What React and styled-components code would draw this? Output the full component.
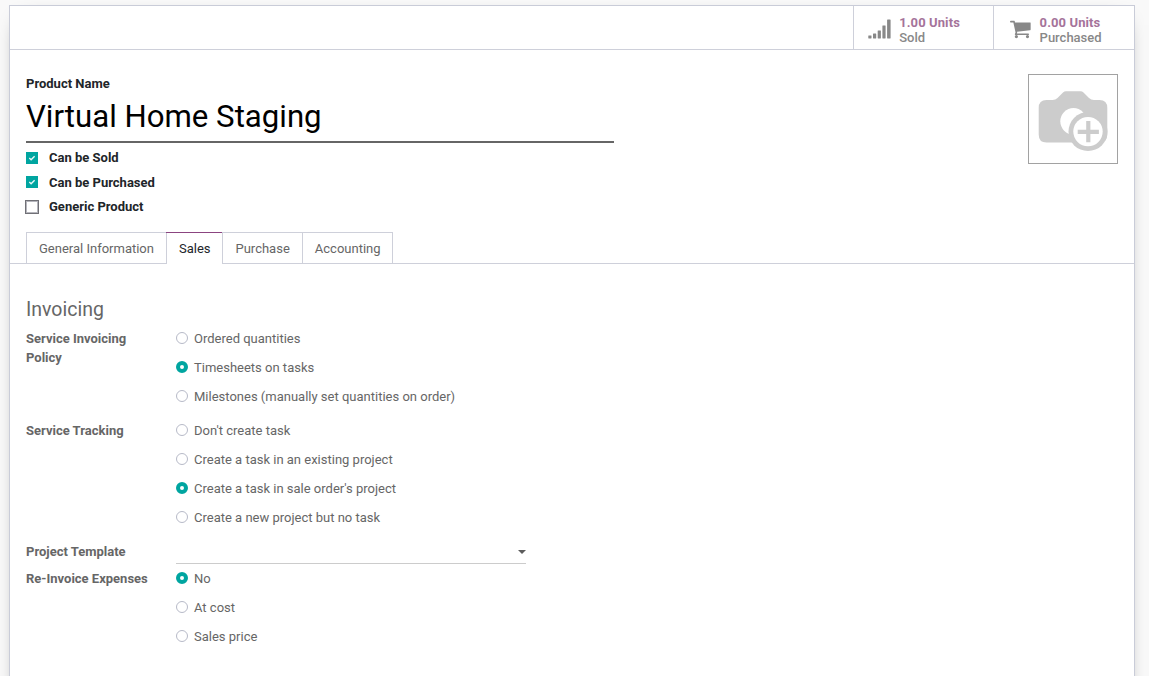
import React from "react";
import styled, { createGlobalStyle } from "styled-components";

const GlobalStyle = createGlobalStyle`
  *, *::before, *::after { box-sizing: border-box; }
  html, body { margin: 0; height: 100%; overflow: hidden; background: #f9f9f9; }
  body {
    font-family: Roboto, "Noto Sans", sans-serif;
    font-size: 13px;
    line-height: 19px;
    color: #666;
  }
`;

const Page = styled.div`
  height: 676px;
  padding: 5px 14px 0 9px;
  overflow: hidden;
`;

const Sheet = styled.main`
  height: 720px;
  background: #fff;
  border: 1px solid #c9ccd8;
  box-shadow: 0 5px 20px -15px #000;
`;

const ButtonBox = styled.div`
  display: flex;
  justify-content: flex-end;
  height: 44px;
  border-bottom: 1px solid #ced0da;
`;

const StatButton = styled.div`
  display: flex;
  width: ${(p) => p.$width}px;
  padding: 9px 0 0 14px;
  border-left: 1px solid #ced0da;
  line-height: 15px;
  color: #888;

  svg { flex: none; margin-top: 2px; fill: #888; }
`;

const StatText = styled.div`
  display: flex;
  flex-direction: column;
  margin-left: ${(p) => p.$gap}px;
  font-weight: 500;
`;

const StatValue = styled.span`
  font-weight: 700;
  letter-spacing: 0.1px;
  color: #a5739a;
`;

const TitleArea = styled.section`
  display: flex;
  justify-content: space-between;
  height: 182px;
  padding: 24px 16px 0;
  color: #212529;
`;

const TitleFields = styled.div`
  width: 588px;
`;

const NameLabel = styled.div`
  font-weight: 700;
`;

const NameInput = styled.div`
  height: 50px;
  border-bottom: 2px solid #666;
  font-size: 31.2px;
  line-height: 48px;
  color: #000;
`;

const CheckRow = styled.div`
  display: flex;
  align-items: center;
  height: 24.5px;
  font-weight: 700;
`;

const CheckList = styled.div`
  padding-top: 2.5px;
`;

const CheckCell = styled.div`
  width: 23px;
  height: 14px;
`;

const CheckBox = styled.div`
  width: ${(p) => (p.$checked ? 12 : 14)}px;
  height: ${(p) => (p.$checked ? 12 : 14)}px;
  margin: ${(p) => (p.$checked ? "1px 0 0 0" : "0 0 0 -1px")};
  background: ${(p) => (p.$checked ? "#00a5a0" : "#fff")};
  border: ${(p) => (p.$checked ? "0" : "1px solid #707076")};
  box-shadow: ${(p) => (p.$checked ? "none" : "inset 0 0 0 1px #b5b5bc")};
  svg { display: block; }
`;

const ImageBox = styled.div`
  width: 90px;
  height: 90px;
  border: 1px solid #a2a2a2;
  svg { display: block; }
`;

const TabBar = styled.nav`
  display: flex;
  height: 32px;
  padding-left: 16px;
  border-bottom: 1px solid #ced0da;
`;

const Tab = styled.div`
  height: ${(p) => (p.$active ? 32 : 31)}px;
  width: ${(p) => p.$width}px;
  padding: 6px 0 0 ${(p) => p.$inset || 12}px;
  border: solid #ced0da;
  border-width: 1px ${(p) => (p.$last ? 1 : 0)}px 0 ${(p) => (p.$active ? 0 : 1)}px;
  border-top-color: ${(p) => (p.$active ? "#8b4480" : "#ced0da")};
  background: #fff;
  color: ${(p) => (p.$active ? "#212529" : "#666")};
  white-space: nowrap;
`;

const TabDivider = styled.span`
  width: 1px;
  height: 31px;
  background: linear-gradient(#8b4480 1px, #ced0da 1px);
  box-shadow: 0 1px 0 #ced0da;
`;

const TabContent = styled.section`
  padding: 33px 16px 0;
`;

const GroupTitle = styled.h2`
  margin: 0 0 6px;
  font-size: 19.5px;
  font-weight: 400;
  line-height: 26px;
`;

const Field = styled.div`
  display: grid;
  grid-template-columns: 150px 350px;
  margin-bottom: ${(p) => p.$gap || 0}px;
`;

const FieldLabel = styled.div`
  padding-right: 16px;
  font-weight: 700;
`;

const RadioList = styled.div`
  display: flex;
  flex-direction: column;
  gap: 10px;
`;

const RadioRow = styled.div`
  display: flex;
  align-items: center;
  gap: 6px;
  white-space: nowrap;
`;

const Radio = styled.span`
  width: 12px;
  height: 12px;
  margin-bottom: 1px;
  border-radius: 50%;
  background: #fff;
  border: ${(p) => (p.$checked ? "4px solid #00a5a0" : "1px solid #b7bac8")};
`;

const Select = styled.div`
  display: flex;
  justify-content: flex-end;
  height: 22px;
  padding-top: 8px;
  border-bottom: 1px solid #ccc;
`;

const Caret = styled.span`
  width: 8px;
  height: 4px;
  border: 4px solid transparent;
  border-top-color: #5c5c5c;
  border-bottom: 0;
`;

function SignalIcon() {
  return (
    <svg width="24" height="22" viewBox="0 0 24 22">
      <rect x="0.3" y="18.4" width="3.2" height="3" rx="0.4" />
      <rect x="5" y="16.6" width="3.2" height="4.8" rx="0.4" />
      <rect x="9.7" y="13.4" width="3.2" height="8" rx="0.4" />
      <rect x="14.4" y="8.4" width="3.2" height="13" rx="0.4" />
      <rect x="19.1" y="2.6" width="3.5" height="18.8" rx="0.4" />
    </svg>
  );
}

function CartIcon() {
  return (
    <svg width="24" height="24" viewBox="-100 -50 1937 1937">
      <path d="M704 1536q0 52-38 90t-90 38-90-38-38-90 38-90 90-38 90 38 38 90zm896 0q0 52-38 90t-90 38-90-38-38-90 38-90 90-38 90 38 38 90zm128-1088v512q0 24-16.5 42.5t-40.5 21.5l-1044 122q13 60 13 70 0 16-24 64h920q26 0 45 19t19 45-19 45-45 19h-1024q-26 0-45-19t-19-45q0-11 8-31.5t16-36 21.5-40 15.5-29.5l-177-823h-204q-26 0-45-19t-19-45 19-45 45-19h256q16 0 28.5 6.5t19.5 15.5 13 24.5 8 26 5.5 29.5 4.5 26h1201q26 0 45 19t19 45z" />
    </svg>
  );
}

function CameraIcon() {
  return (
    <svg width="88" height="88" viewBox="0 0 88 88">
      <path
        fill="#ccc"
        d="M17.5 25H23.5Q26.5 25 28.5 23L34 17.5Q35.3 16.2 37 16.2H51.5Q53.2 16.2 54.5 17.5L60 23Q62 25 65 25H70.5Q78.3 25 78.3 33V59.5Q78.3 67.5 70.5 67.5H17.5Q9.7 67.5 9.7 59.5V33Q9.7 25 17.5 25Z"
      />
      <circle cx="44.5" cy="46.3" r="13.2" fill="#fff" />
      <circle cx="59" cy="56.6" r="19.5" fill="#ccc" />
      <circle cx="59" cy="56.6" r="14.7" fill="#fff" />
      <path d="M59.3 46V67.2M48.7 56.8H69.9" stroke="#ccc" strokeWidth="4.2" />
    </svg>
  );
}

function Check({ checked, label }) {
  return (
    <CheckRow>
      <CheckCell>
        <CheckBox $checked={checked}>
          {checked && (
            <svg width="12" height="12" viewBox="0 0 12 12">
              <path d="M3.3 6.1 5.1 7.8 8.6 4.2" fill="none" stroke="#e8f7f7" strokeWidth="1.4" />
            </svg>
          )}
        </CheckBox>
      </CheckCell>
      {label}
    </CheckRow>
  );
}

function RadioField({ label, options, selected, gap }) {
  return (
    <Field $gap={gap}>
      <FieldLabel>{label}</FieldLabel>
      <RadioList>
        {options.map((option, i) => (
          <RadioRow key={option}>
            <Radio $checked={i === selected} />
            {option}
          </RadioRow>
        ))}
      </RadioList>
    </Field>
  );
}

export default function App() {
  return (
    <Page>
      <GlobalStyle />
      <Sheet>
        <ButtonBox>
          <StatButton $width={140}>
            <SignalIcon />
            <StatText $gap={7.2}>
              <StatValue>1.00 Units</StatValue>
              <span>Sold</span>
            </StatText>
          </StatButton>
          <StatButton $width={141}>
            <CartIcon />
            <StatText $gap={7.6}>
              <StatValue>0.00 Units</StatValue>
              <span>Purchased</span>
            </StatText>
          </StatButton>
        </ButtonBox>
        <TitleArea>
          <TitleFields>
            <NameLabel>Product Name</NameLabel>
            <NameInput>Virtual Home Staging</NameInput>
            <CheckList>
              <Check checked label="Can be Sold" />
              <Check checked label="Can be Purchased" />
              <Check label="Generic Product" />
            </CheckList>
          </TitleFields>
          <ImageBox>
            <CameraIcon />
          </ImageBox>
        </TitleArea>
        <TabBar>
          <Tab $width={140}>General Information</Tab>
          <TabDivider />
          <Tab $width={55} $active>Sales</Tab>
          <Tab $width={80} $inset={12.5}>Purchase</Tab>
          <Tab $width={91} $inset={11.8} $last>Accounting</Tab>
        </TabBar>
        <TabContent>
          <GroupTitle>Invoicing</GroupTitle>
          <RadioField
            label="Service Invoicing Policy"
            options={["Ordered quantities", "Timesheets on tasks", "Milestones (manually set quantities on order)"]}
            selected={1}
            gap={15}
          />
          <RadioField
            label="Service Tracking"
            options={[
              "Don't create task",
              "Create a task in an existing project",
              "Create a task in sale order's project",
              "Create a new project but no task",
            ]}
            selected={2}
            gap={15}
          />
          <Field $gap={5}>
            <FieldLabel>Project Template</FieldLabel>
            <Select>
              <Caret />
            </Select>
          </Field>
          <RadioField label="Re-Invoice Expenses" options={["No", "At cost", "Sales price"]} selected={0} />
        </TabContent>
      </Sheet>
    </Page>
  );
}
